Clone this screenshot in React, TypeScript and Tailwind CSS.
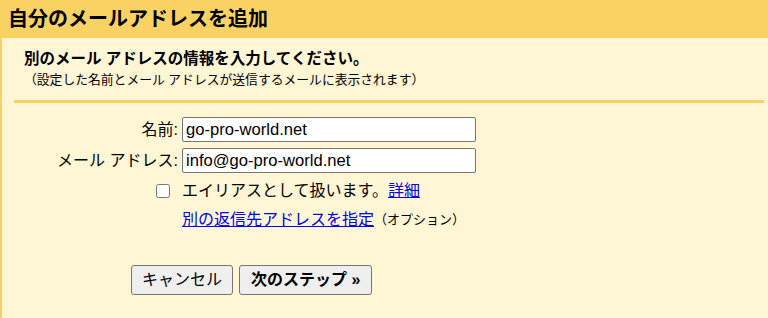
import React from "react";

const FONT = {
  fontFamily: '"Liberation Sans", Arial, "Noto Sans CJK JP", sans-serif',
};

const App = () => {
  return (
    <div
      className="w-[768px] h-[318px] overflow-hidden bg-[#fff6d6] text-black"
      style={FONT}
    >
      <div className="h-[38px] bg-[#fad264] px-[8px] flex items-center text-[20px] font-bold leading-none">
        自分のメールアドレスを追加
      </div>
      <div className="h-[280px] border-l-2 border-[#fad264] pl-[12px] pr-[4px]">
        <div className="pl-[10px] pt-[11px]">
          <div className="text-[15.5px] font-bold leading-[20px]">
            別のメール アドレスの情報を入力してください。
          </div>
          <div className="text-[12.8px] leading-[16px] mt-[3px]">
            （設定した名前とメール アドレスが送信するメールに表示されます）
          </div>
        </div>
        <div className="h-[3px] bg-[#fad264] mt-[12px]" />

        <div className="mt-[14px] grid grid-cols-[164px_auto] gap-x-[4px] items-center">
          <label className="text-right text-[16px]">名前:</label>
          <input
            className="w-[294px] h-[25px] bg-white border border-[#767676] rounded-[2px] px-[3px] text-[16.6px] outline-none"
            defaultValue="go-pro-world.net"
          />
          <label className="text-right text-[16px] mt-[6px]">メール アドレス:</label>
          <input
            className="w-[294px] h-[25px] mt-[6px] bg-white border border-[#767676] rounded-[2px] px-[3px] text-[16.6px] outline-none"
            defaultValue="info@go-pro-world.net"
          />
          <div className="flex justify-end pr-[8px] mt-[8px] h-[20px] items-center">
            <input type="checkbox" className="m-0 w-[14px] h-[14px]" />
          </div>
          <div className="mt-[8px] h-[20px] flex items-center text-[16px]">
            エイリアスとして扱います。
            <a href="#" className="text-[#0000ee] underline">
              詳細
            </a>
          </div>
          <div />
          <div className="mt-[9px] h-[20px] flex items-center">
            <a href="#" className="text-[16px] text-[#0000ee] underline">
              別の返信先アドレスを指定
            </a>
            <span className="text-[13px]">（オプション）</span>
          </div>
        </div>

        <div className="mt-[35px] ml-[117px] flex gap-[6px]">
          <button className="h-[30px] px-[10px] bg-[#efefef] border border-[#767676] rounded-[3px] text-[16px]">
            キャンセル
          </button>
          <button className="h-[30px] px-[11px] bg-[#efefef] border border-[#767676] rounded-[3px] text-[16px] font-bold">
            次のステップ »
          </button>
        </div>
      </div>
    </div>
  );
};

export default App;
